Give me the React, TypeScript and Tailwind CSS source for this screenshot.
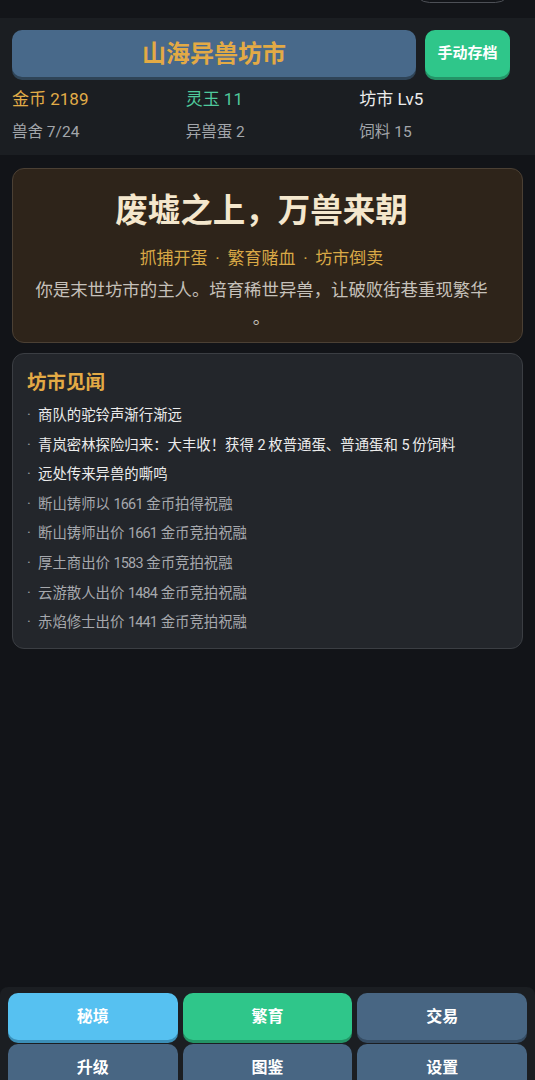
const stats = [
  { label: '金币 2189', cls: 'text-[17px] text-[#e2ad48]' },
  { label: '灵玉 11', cls: 'text-[17px] text-[#4fc99c]' },
  { label: '坊市 Lv5', cls: 'text-[17px] text-[#ececec]' },
  { label: '兽舍 7/24', cls: 'text-[15.5px] text-[#a3a6ab]' },
  { label: '异兽蛋 2', cls: 'text-[15.5px] text-[#a3a6ab]' },
  { label: '饲料 15', cls: 'text-[15.5px] text-[#a3a6ab]' },
]

const logs = [
  { text: '商队的驼铃声渐行渐远', fresh: true },
  { text: '青岚密林探险归来：大丰收！获得 2 枚普通蛋、普通蛋和 5 份饲料', fresh: true },
  { text: '远处传来异兽的嘶鸣', fresh: true },
  { text: '断山铸师以 1661 金币拍得祝融', fresh: false },
  { text: '断山铸师出价 1661 金币竞拍祝融', fresh: false },
  { text: '厚土商出价 1583 金币竞拍祝融', fresh: false },
  { text: '云游散人出价 1484 金币竞拍祝融', fresh: false },
  { text: '赤焰修士出价 1441 金币竞拍祝融', fresh: false },
]

const tabs = [
  { label: '秘境', cls: 'bg-[#56c1f1] shadow-[0_3px_0_#3b8fb8]' },
  { label: '繁育', cls: 'bg-[#2fc68a] shadow-[0_3px_0_#239466]' },
  { label: '交易', cls: 'bg-[#486683] shadow-[0_3px_0_#354c63]' },
  { label: '升级', cls: 'bg-[#486683] shadow-[0_3px_0_#354c63]' },
  { label: '图鉴', cls: 'bg-[#486683] shadow-[0_3px_0_#354c63]' },
  { label: '设置', cls: 'bg-[#486683] shadow-[0_3px_0_#354c63]' },
]

// digits in the log run narrow; tighten them a little
function LogText({ text }: { text: string }) {
  return (
    <>
      {text.split(/(\d+)/).map((part, i) =>
        /^\d+$/.test(part) ? (
          <span key={i} className="tracking-[-0.8px]">{part}</span>
        ) : (
          <span key={i}>{part}</span>
        ),
      )}
    </>
  )
}

export default function App() {
  return (
    <div
      className="min-h-screen bg-[#121418] text-[#e6e6e6]"
      style={{ fontFamily: 'Roboto, "Noto Sans CJK SC", sans-serif' }}
    >
      {/* Top strip — clipped pill of the previous bar */}
      <div className="flex h-[18px] justify-end overflow-hidden bg-[#131519] pr-[23px]">
        <div className="-mt-[30px] h-[33px] w-[99px] rounded-full border border-[#4d5056]" />
      </div>

      {/* Header — title, save, resources */}
      <header className="bg-[#1b1e22] pt-3 pr-3 pb-[12px] pl-3">
        <div className="flex gap-[9px] pr-[13px]">
          <div className="flex h-[47px] flex-1 items-center justify-center rounded-[10px] bg-[#48698a] shadow-[0_3px_0_#2f4457]">
            <span className="text-[24px] font-bold text-[#e3aa45]">山海异兽坊市</span>
          </div>
          <button className="h-[47px] w-[85px] rounded-[10px] bg-[#2fc68a] text-[15px] font-bold text-white shadow-[0_3px_0_#249467]">
            手动存档
          </button>
        </div>
        <div className="mt-[11px] grid grid-cols-3 gap-x-[10px] gap-y-[11px]">
          {stats.map((s) => (
            <div key={s.label} className={`h-[22px] leading-[22px] ${s.cls}`}>
              {s.label}
            </div>
          ))}
        </div>
      </header>

      <main className="flex flex-col gap-[10px] px-3 pt-[13px]">
        {/* Hero card */}
        <section className="rounded-[12px] border border-[#4b4034] bg-[#2e241a] pt-[20px] pr-[26px] pb-[10px] pl-[14px] text-center">
          <h1 className="text-[32.5px] leading-[44px] font-bold text-[#f4e7cd]">废墟之上，万兽来朝</h1>
          <p className="mt-[14px] text-[17px] leading-[22px] text-[#d9a946] [word-spacing:3.5px]">
            抓捕开蛋 · 繁育赌血 · 坊市倒卖
          </p>
          <p className="mt-[7px] text-[17.4px] leading-[28px] text-[#c6c1ba] [line-break:anywhere]">
            你是末世坊市的主人。培育稀世异兽，让破败街巷重现繁华。
          </p>
        </section>

        {/* News log */}
        <section className="rounded-[12px] border border-[#3b3e43] bg-[#23262b] px-[14px] pt-[15px] pb-[10px]">
          <h2 className="text-[19.5px] leading-[28px] font-bold text-[#e3aa45]">坊市见闻</h2>
          <ul className="mt-[4px]">
            {logs.map((l) => (
              <li
                key={l.text}
                className={`flex h-[29.6px] items-center text-[14.4px] ${l.fresh ? 'text-[#ececec]' : 'text-[#a6a8ad]'}`}
              >
                <span className="w-[11px] shrink-0 text-[#9a9ca1]">·</span>
                <span className="whitespace-pre">
                  <LogText text={l.text} />
                </span>
              </li>
            ))}
          </ul>
        </section>
      </main>

      {/* Bottom nav */}
      <nav className="fixed inset-x-0 bottom-[-17px] rounded-t-[8px] bg-[#1b1e22] px-2 pt-[6px] pb-[6px]">
        <div className="grid grid-cols-3 gap-x-[5px] gap-y-[4px]">
          {tabs.map((t) => (
            <button
              key={t.label}
              className={`h-[47px] rounded-[10px] text-[16px] font-bold text-white ${t.cls}`}
            >
              {t.label}
            </button>
          ))}
        </div>
      </nav>
    </div>
  )
}
